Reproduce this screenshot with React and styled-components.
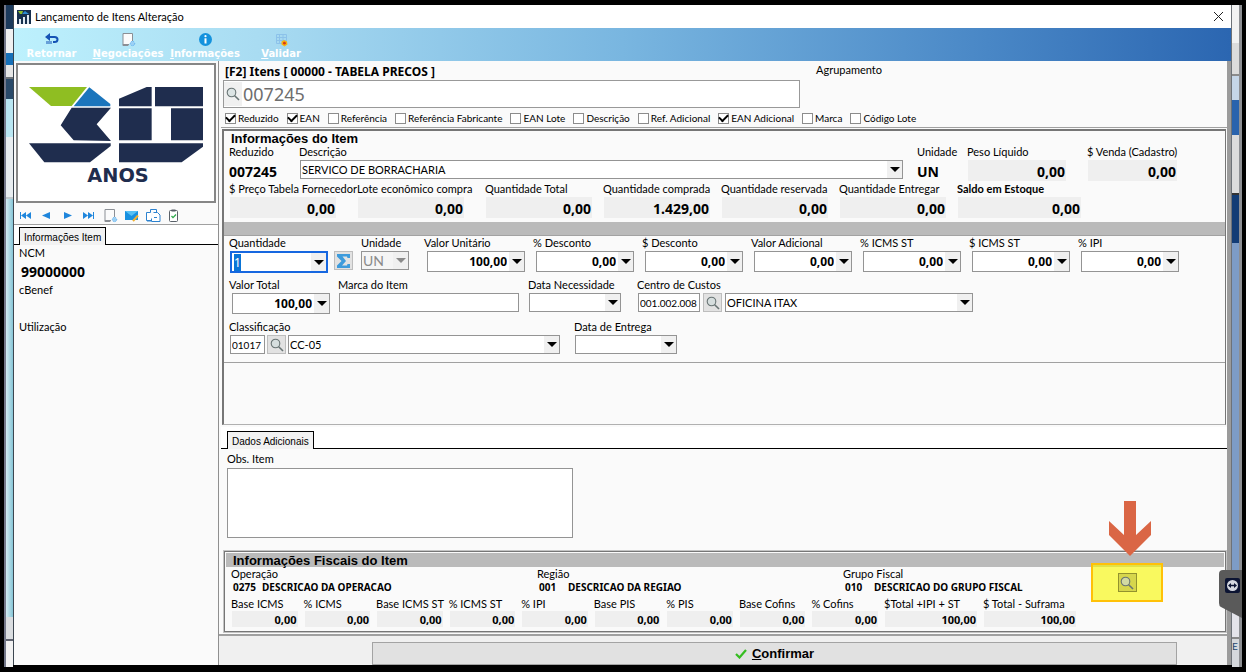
import React, { useState } from 'react'
import styled, { createGlobalStyle, css } from 'styled-components'

const ui = 'Lato, "Noto Sans", sans-serif'
const strong = '"Noto Sans", "Open Sans", sans-serif'
const sans = '"Liberation Sans", Arial, sans-serif'

const GlobalStyle = createGlobalStyle`
  * { box-sizing: border-box; }
  body { margin: 0; background: #000; }
  input, select, button, textarea {
    font-family: inherit;
    color: inherit;
    margin: 0;
    border-radius: 0;
  }
`

const Desktop = styled.div`
  position: relative;
  display: grid;
  grid-template-columns: 9px minmax(0, 1fr) 10px;
  min-height: 100vh;
  padding: 5px 4px;
  background: #000;
  color: #000;
  font: 11px/14px ${ui};
`

const Strip = styled.div`
  display: flex;
  flex-direction: column;
  overflow: hidden;
  border-left: ${p => (p.$left ? '2px solid #74788a' : '0')};
  border-right: ${p => (p.$left ? '0' : '3px solid #8d8f93')};
`

const Slice = styled.div`
  height: ${p => p.$h || 'auto'};
  flex: ${p => (p.$h ? 'none' : '1')};
  background: ${p => p.$bg};
  border-bottom: ${p => (p.$line ? `2px solid ${p.$line}` : '0')};
  color: #26466b;
  font-size: 10px;
`

const Window = styled.section`
  display: flex;
  flex-direction: column;
  min-width: 0;
  margin-bottom: 2px;
  border-left: 1px solid #3c4650;
  border-right: 1px solid #6d7278;
  background: #fafafa;
`

const TitleBar = styled.header`
  display: flex;
  align-items: center;
  gap: 4px;
  height: 23px;
  padding: 0 7px 0 3px;
  background: #fff;

  h1 {
    flex: 1;
    margin: 0;
    font-size: 11px;
    font-weight: 400;
  }
`

const PlainButton = styled.button`
  display: flex;
  align-items: center;
  justify-content: center;
  padding: 0;
  border: 0;
  background: none;
`

const Toolbar = styled.nav`
  display: flex;
  height: 33px;
  padding: 0 7px;
  background: linear-gradient(90deg, #bdf1fd 0%, #a9dcf2 20%, #79b6e0 50%, #4987c6 80%, #2b66b1 100%);
`

const ToolButton = styled.button`
  display: flex;
  flex-direction: column;
  align-items: center;
  justify-content: flex-start;
  width: ${p => p.$w};
  padding: 4px 0 0;
  border: 0;
  background: none;
  color: #fff;
  font-family: "DejaVu Sans", sans-serif;
  font-size: 10px;
  font-weight: 700;
  line-height: 13px;

  span::first-letter { text-decoration: ${p => (p.$plain ? 'none' : 'underline')}; }
`

const Body = styled.div`
  display: grid;
  grid-template-columns: 205px minmax(0, 1fr);
  flex: 1;
`

const Sidebar = styled.aside`
  display: flex;
  flex-direction: column;
  border-right: 1px solid #8f8f8f;
`

const LogoFrame = styled.div`
  height: 140px;
  margin: 2px 2px 3px;
  border: 2px solid #868686;
  background: #fff;

  svg { display: block; width: 100%; height: 100%; }
`

const NavRow = styled.div`
  display: flex;
  align-items: center;
  gap: 7px;
  height: 19px;
  padding-left: 5px;
  border-bottom: 1px solid #a0a0a0;
`

const TabStrip = styled.div`
  display: flex;
  padding: ${p => p.$pad};
  background: #fff;
  border-bottom: 1px solid #000;
`

const Tab = styled.button`
  height: 18px;
  margin-bottom: -1px;
  padding: 2px 4px 0;
  border: 1px solid #000;
  border-bottom: 0;
  background: #f2f2f2;
  font-family: ${sans};
  font-size: 10px;
  line-height: 14px;
`

const SideInfo = styled.dl`
  margin: 0;
  padding: 0 5px;

  dt { line-height: 15px; }
  dd {
    margin: 0;
    height: 22px;
    padding: 2px;
    font-family: ${strong};
    font-size: 14px;
    line-height: 20px;
    font-weight: 700;
  }
`

const Main = styled.main`
  display: flex;
  flex-direction: column;
  min-width: 0;
  padding-left: 2px;
  border-right: 4px solid #9b9b9b;
`

const SearchArea = styled.section`
  display: grid;
  grid-template-columns: 577px 1fr;
  column-gap: 16px;
  height: 67px;
  padding: 2px 2px 0;
  border-bottom: 1px solid #a0a0a0;
`

const SearchTitle = styled.label`
  display: block;
  height: 17px;
  padding-left: 2px;
  font-family: ${strong};
  font-size: 12px;
  line-height: 17px;
  font-weight: 700;
`

const SearchBox = styled.div`
  display: flex;
  height: 28px;
  border: 1px solid #999;
  background: #fff;

  button { width: 18px; margin: 1px 0; background: #f0f0f0; }

  input {
    flex: 1;
    border: 0;
    padding: 0 1px;
    background: none;
    color: #6e6e6e;
    font-family: ${strong};
    font-size: 18px;
    outline: 0;
  }
`

const CheckRow = styled.div`
  display: flex;
  gap: 8px;
  grid-column: 1 / -1;
  padding: 0 2px;
  line-height: 20px;
  font-size: 10px;
  white-space: nowrap;

  label { display: flex; align-items: center; gap: 2px; }

  input {
    appearance: none;
    display: grid;
    place-items: center;
    width: 11px;
    height: 11px;
    border: 1px solid #8c8c8c;
    background: #fff;
  }

  input:checked::after {
    content: '';
    width: 7px;
    height: 4px;
    margin-bottom: 2px;
    border-left: 2px solid #000;
    border-bottom: 2px solid #000;
    transform: rotate(-45deg);
  }
`

const ItemPanel = styled.section`
  display: flex;
  flex-direction: column;
  flex: 1;
  margin: 1px 1px 2px 1px;
  border: 2px solid #767676;
  border-right-width: 1px;
  border-bottom-color: #b0b0b0;
  border-bottom-width: 1px;
`

const PanelTitle = styled.h2`
  margin: 0;
  height: 14px;
  padding-left: 7px;
  background: ${p => (p.$grey ? '#bababa' : 'none')};
  font-family: ${sans};
  font-size: 13px;
  line-height: ${p => (p.$grey ? '15px' : '16px')};
  font-weight: 700;
`

const Divider = styled.div`
  height: 14px;
  background: #bababa;
  border-bottom: 1px solid #a2a2a2;
`

const FieldRow = styled.div`
  display: grid;
  grid-template-columns: ${p => p.$cols};
  padding: 0 48px 0 5px;
  height: ${p => p.$h || '42px'};
  align-content: start;
`

const FieldBox = styled.div`
  min-width: 0;
  margin-right: ${p => p.$gap || '0'};
  white-space: nowrap;

  > label {
    display: block;
    height: 15px;
    line-height: 13px;
    font-weight: ${p => (p.$strong ? 700 : 400)};
  }
`

const Line = styled.div`
  display: flex;
  gap: ${p => p.$gap || '3px'};
  margin-left: ${p => p.$indent || '1px'};
`

const Value = styled.output`
  display: block;
  height: ${p => (p.$small ? '16px' : '21px')};
  margin-left: ${p => (p.$plain ? '-1px' : '1px')};
  padding: 0 1px;
  background: ${p => (p.$plain ? 'none' : '#efefef')};
  font-family: ${strong};
  font-size: ${p => (p.$small ? '11px' : '14px')};
  line-height: ${p => (p.$small ? '18px' : '23px')};
  font-weight: 700;
  text-align: ${p => (p.$plain ? 'left' : 'right')};
`

const ComboShell = styled.div`
  position: relative;
  display: flex;
  width: ${p => p.$w || '98px'};
  flex: ${p => (p.$w ? 'none' : '1')};
  height: ${p => (p.$tall ? '21px' : '19px')};
  border: 1px solid #949494;
  background: #fff;

  ${p => p.$focus && css`
    height: 22px;
    border: 2px solid #1667e0;
  `}

  ${p => p.$off && css`
    background: #f5f5f5;
    color: #8a8a8a;
  `}
`

const ComboInput = styled.input`
  flex: 1;
  min-width: 0;
  padding: 0 2px;
  border: 0;
  outline: 0;
  background: none;
  font-family: ${strong};
  font-size: 12px;
  font-weight: ${p => (p.$left ? 400 : 700)};
  text-align: ${p => (p.$left ? 'left' : 'right')};

  &::selection { background: #0a74d6; color: #fff; }
`

const Arrow = styled.button`
  display: flex;
  align-items: center;
  justify-content: center;
  width: 15px;
  padding: 0;
  border: 0;
  background: #f0f0f0;

  &::before {
    content: '';
    border: 5px solid transparent;
    border-top-color: currentColor;
    border-bottom: 0;
  }
`

const Select = styled.select`
  appearance: none;
  flex: 1;
  min-width: 0;
  padding: 0 1px;
  border: 0;
  background: none;
  font-size: ${p => p.$size || '11px'};

  &:disabled { opacity: 1; }
`

const SelectArrow = styled(Arrow).attrs({ as: 'span' })`
  pointer-events: none;
`

const TextInput = styled.input`
  width: ${p => p.$w};
  height: 19px;
  padding: 0 1px;
  border: 1px solid #949494;
  background: #fff;
  font-size: 10px;
`

const SquareButton = styled.button`
  display: flex;
  align-items: center;
  justify-content: center;
  width: 19px;
  height: 19px;
  padding: 0;
  border: 1px solid #bdbdbd;
  background: #e2e2e2;
`

const Rest = styled.div`
  flex: 1;
  border-top: 1px solid #a0a0a0;
`

const Notes = styled.section`
  padding: 0 6px 13px;

  label { display: block; line-height: 19px; }

  textarea {
    display: block;
    width: 346px;
    height: 70px;
    border: 1px solid #949494;
    background: #fff;
    resize: none;
  }
`

const FiscalPanel = styled.section`
  position: relative;
  margin: 0 1px 2px 3px;
  border: 1px solid #767676;
  outline: 1px solid #c4c4c4;
  padding: 1px;
`

const FiscalGrid = styled.div`
  display: grid;
  grid-template-columns: repeat(3, 306px);
  padding-left: 5px;
  line-height: 13px;

  dl { margin: 0; }
  dd {
    display: flex;
    margin: 0;
    padding-left: 2px;
    font-family: ${strong};
    font-size: 10px;
    line-height: 15px;
    font-weight: 700;
  }
  dd span { width: 29px; }
`

const TaxGrid = styled.div`
  display: grid;
  grid-template-columns: repeat(9, minmax(0, 1fr)) 93px 93px;
  gap: 0 6px;
  width: 845px;
  margin: 1px 0 3px 5px;
  white-space: nowrap;

  label { display: block; line-height: 15px; }
`

const Highlight = styled.div`
  position: absolute;
  right: 62px;
  top: 11px;
  display: flex;
  align-items: center;
  justify-content: center;
  width: 72px;
  height: 39px;
  border: 2px solid #ffc107;
  background: rgba(248, 248, 0, 0.62);

  button { border-color: #92922e; background: #d6d64c; }
`

const Pointer = styled.svg`
  position: absolute;
  right: 74px;
  top: -51px;
`

const Footer = styled.footer`
  display: flex;
  height: 31px;
  margin-left: -2px;
  padding: 6px 50px 0 153px;
  border-top: 2px solid #a0a0a0;
  background: #f0f0f0;
`

const ConfirmButton = styled.button`
  display: flex;
  flex: 1;
  align-items: center;
  justify-content: center;
  gap: 5px;
  border: 1px solid #a3a3a3;
  background: #e1e1e1;
  font-family: ${sans};
  font-size: 13px;
  font-weight: 700;
`

const RemoteTab = styled.svg`
  position: absolute;
  right: 4px;
  top: 570px;
`

const Magnifier = ({ size = 14 }) => (
  <svg width={size} height={size} viewBox="0 0 14 14" fill="none">
    <circle cx="5.5" cy="5.5" r="4.3" fill="#cfdcdc" fillOpacity="0.6" stroke="#687474" strokeWidth="1.1" />
    <path d="M8.7 8.7l4.3 4.3" stroke="#687474" strokeWidth="1.6" />
  </svg>
)

const AppIcon = () => (
  <svg width="14" height="14" viewBox="0 0 14 14">
    <path fill="#16304e" d="M0 0h14v14H0z" />
    <path fill="#8dbf2c" d="M1 1h5L5 4H3z" />
    <path fill="#2c8ad0" d="M8 1l4 3H5z" />
    <path fill="#dfe9f2" d="M2 9h2v5H2zM6 7h2v7H6zM10 5h2v9h-2z" />
  </svg>
)

const ReturnIcon = () => (
  <svg width="16" height="15" viewBox="0 0 16 15" fill="none">
    <path d="M5 5h5.500q3 0 3 2.500T10.500 10H9" stroke="#1553b5" strokeWidth="2" />
    <path d="M1 5l5-4v8z" fill="#1553b5" />
    <path d="M3 9v3M5 9v3M7 9v3" stroke="#1553b5" />
  </svg>
)

const PageIcon = () => (
  <svg width="15" height="15" viewBox="0 0 15 15" fill="none">
    <path d="M2 1.500h9.500V9M2 1.500v11h6" stroke="#8b8f95" fill="#fbfbfb" />
    <path fill="#fbfbfb" d="M3 2h8v8l-3 2H3z" />
    <path d="M1 12.500h7l-1 1.500H2z" fill="#8b8f95" />
    <circle cx="11.500" cy="11.500" r="2.200" fill="#9cd0f5" stroke="#5aaef0" strokeDasharray="1 1" />
  </svg>
)

const InfoIcon = () => (
  <svg width="15" height="15" viewBox="0 0 15 15">
    <circle cx="7.500" cy="7.500" r="6.500" fill="#1492dd" />
    <circle cx="7.500" cy="4.200" r="1.100" fill="#fff" />
    <path d="M6.500 6.300h2v5.200h-2z" fill="#fff" />
  </svg>
)

const ValidateIcon = () => (
  <svg width="15" height="15" viewBox="0 0 15 15" fill="none">
    <path d="M2.500 2.500h10v9h-10zM2.500 5.500h10M2.500 8.500h10M5.500 2.500v9M9 2.500v9" stroke="#8cc2ea" />
    <path d="M7.500 9.500l2.500-1.500 3 1.500 .500 3-3 2-3-2z" fill="#f6b312" />
    <circle cx="10.400" cy="11.200" r="1.400" fill="#d83a1a" />
  </svg>
)

const arrows = {
  first: 'M1 4h1v7H1zM7 4v7L2 7.500zM12 4v7L7 7.500z',
  prev: 'M10 4v7L2 7.500z',
  next: 'M3 4v7l8-3.500z',
  last: 'M1 4v7l5-3.500zM6 4v7l5-3.500zM11 4h1v7h-1z',
}

const NavArrow = ({ kind }) => (
  <svg width="14" height="15" viewBox="0 0 14 15"><path fill="#1f86dc" d={arrows[kind]} /></svg>
)

const MailIcon = () => (
  <svg width="14" height="15" viewBox="0 0 14 15">
    <path fill="#1790e0" d="M0 3h13v9H0z" />
    <path fill="#55c0f5" d="M0 3h13L6.500 8z" />
    <path stroke="#f0b030" strokeWidth="2" d="M13 7.500l-5 5.500" />
  </svg>
)

const CopyIcon = () => (
  <svg width="15" height="15" viewBox="0 0 15 15" fill="none" stroke="#2c82cf">
    <path d="M4.500 1.500h6v3M4.500 1.500v3H.5v8h5" fill="#fff" />
    <path d="M7.500 4.500h4l2.500 2.500v6.500H5.500v-3" fill="#fff" />
    <path d="M8 9.500h3M1 13h4" />
  </svg>
)

const ClipIcon = () => (
  <svg width="12" height="15" viewBox="0 0 12 15" fill="none">
    <rect x="1.500" y="2.500" width="8" height="11" rx="1" stroke="#596068" fill="#fff" />
    <path d="M3.500 1.500h4v2h-4z" fill="#596068" />
    <path d="M3.500 8L5 9.600 8 6.500" stroke="#2ba84a" strokeWidth="1.300" />
  </svg>
)

const Logo = () => (
  <svg viewBox="54 196 588 404" role="img" aria-label="30 anos">
    <path fill="#8fbe22" d="M87 260h174l-46 57h-62z" />
    <path fill="#1b75bc" d="M268 261l63 50v7H221z" />
    <g fill="#1f2d4e">
      <path d="M215 322h118l-43 50 43 50-112-2-39-45z" />
      <path d="M87 429h245v8l-62 49H133z" />
      <path d="M357 318v-23l83-35h15v58zM465 260h144v58H465z" />
      <path d="M357 324h98v96h-98zM513 324h96v96h-96z" />
      <path d="M357 429h252v10l-64 47H357z" />
      <text x="354" y="546" fontFamily="DejaVu Sans" fontWeight="700" fontSize="58" textAnchor="middle">ANOS</text>
    </g>
  </svg>
)

const Sigma = () => (
  <svg width="15" height="16" viewBox="0 0 15 16">
    <path fill="#3d9bdc" d="M1 1h13v4h-2.500L11 3.500H6.500L10 8l-4 4.500h5l.5-1.500H14v4H1v-2.500L5.500 8 1 3.500z" />
  </svg>
)

const Field = ({ label, gap, strong, id, children }) => (
  <FieldBox $gap={gap} $strong={strong}>
    <label htmlFor={id}>{label}</label>
    {children}
  </FieldBox>
)

const ValueField = ({ id, label, value, gap, strong, plain }) => (
  <Field id={id} label={label} gap={gap} strong={strong}>
    <Value id={id} $plain={plain}>{value}</Value>
  </Field>
)

const Combo = ({ id, value = '', w, tall, focus, left }) => {
  const [text, setText] = useState(value)
  return (
    <ComboShell $w={w} $tall={tall} $focus={focus}>
      <ComboInput
        id={id}
        value={text}
        $left={left}
        autoFocus={focus}
        onFocus={evt => focus && evt.target.select()}
        onChange={evt => setText(evt.target.value)}
      />
      <Arrow type="button" aria-label="Abrir" />
    </ComboShell>
  )
}

const Dropdown = ({ id, name, value, w, tall, off, size }) => (
  <ComboShell $w={w} $tall={tall} $off={off}>
    <Select id={id} aria-label={name} disabled={off} $size={size} defaultValue={value}>
      <option>{value}</option>
    </Select>
    <SelectArrow />
  </ComboShell>
)

const filters = [
  ['Reduzido', true],
  ['EAN', true],
  ['Referência', false],
  ['Referência Fabricante', false],
  ['EAN Lote', false],
  ['Descrição', false],
  ['Ref. Adicional', false],
  ['EAN Adicional', true],
  ['Marca', false],
  ['Código Lote', false],
]

const stock = [
  ['$ Preço Tabela Fornecedor', '0,00'],
  ['Lote econômico compra', '0,00'],
  ['Quantidade Total', '0,00'],
  ['Quantidade comprada', '1.429,00'],
  ['Quantidade reservada', '0,00'],
  ['Quantidade Entregar', '0,00'],
  ['Saldo em Estoque', '0,00'],
]

const amounts = [
  ['Valor Unitário', '100,00'],
  ['% Desconto', '0,00'],
  ['$ Desconto', '0,00'],
  ['Valor Adicional', '0,00'],
  ['% ICMS ST', '0,00'],
  ['$ ICMS ST', '0,00'],
  ['% IPI', '0,00'],
]

const fiscal = [
  ['Operação', '0275', 'DESCRICAO DA OPERACAO'],
  ['Região', '001', 'DESCRICAO DA REGIAO'],
  ['Grupo Fiscal', '010', 'DESCRICAO DO GRUPO FISCAL'],
]

const taxes = [
  ['Base ICMS', '0,00'],
  ['% ICMS', '0,00'],
  ['Base ICMS ST', '0,00'],
  ['% ICMS ST', '0,00'],
  ['% IPI', '0,00'],
  ['Base PIS', '0,00'],
  ['% PIS', '0,00'],
  ['Base Cofins', '0,00'],
  ['% Cofins', '0,00'],
  ['$Total +IPI + ST', '100,00'],
  ['$ Total - Suframa', '100,00'],
]

export default function App() {
  return (
    <Desktop>
      <GlobalStyle />
      <Strip $left>
        <Slice $h="24px" $bg="#1c3a5c" />
        <Slice $h="24px" $bg="#f0f0f0" />
        <Slice $h="12px" $bg="#1670b8" />
        <Slice $h="14px" $bg="#e6e6e6" $line="#6d7278" />
        <Slice $h="20px" $bg="#2a4a6a" />
        <Slice $h="38px" $bg="#b9e6f2" />
        <Slice $h="62px" $bg="#e8edf0" $line="#c0c8cc" />
        <Slice $bg="linear-gradient(90deg, #d3ecf3, #86c5d6)" />
        <Slice $h="24px" $bg="#dadde0" $line="#5f6370" />
        <Slice $h="26px" $bg="#f2f2f2" />
      </Strip>
      <Window>
        <TitleBar>
          <AppIcon />
          <h1>Lançamento de Itens Alteração</h1>
          <PlainButton type="button" aria-label="Fechar">
            <svg width="11" height="11" viewBox="0 0 11 11"><path d="M1 1l9 9M10 1l-9 9" stroke="#222" /></svg>
          </PlainButton>
        </TitleBar>
        <Toolbar>
          <ToolButton $w="61px" $plain><ReturnIcon /><span>Retornar</span></ToolButton>
          <ToolButton $w="92px"><PageIcon /><span>Negociações</span></ToolButton>
          <ToolButton $w="62px"><InfoIcon /><span>Informações</span></ToolButton>
          <ToolButton $w="90px"><ValidateIcon /><span>Validar</span></ToolButton>
        </Toolbar>
        <Body>
          <Sidebar>
            <LogoFrame><Logo /></LogoFrame>
            <NavRow>
              {Object.keys(arrows).map(kind => (
                <PlainButton key={kind} type="button" aria-label={kind}><NavArrow kind={kind} /></PlainButton>
              ))}
              <PlainButton type="button" aria-label="Novo"><PageIcon /></PlainButton>
              <PlainButton type="button" aria-label="Email"><MailIcon /></PlainButton>
              <PlainButton type="button" aria-label="Copiar"><CopyIcon /></PlainButton>
              <PlainButton type="button" aria-label="Validar"><ClipIcon /></PlainButton>
            </NavRow>
            <TabStrip $pad="2px 5px 0">
              <Tab type="button">Informações Item</Tab>
            </TabStrip>
            <SideInfo>
              <dt>NCM</dt>
              <dd>99000000</dd>
              <dt>cBenef</dt>
              <dd />
              <dt>Utilização</dt>
            </SideInfo>
          </Sidebar>
          <Main>
            <SearchArea>
              <div>
                <SearchTitle htmlFor="busca">[F2] Itens [ 00000 - TABELA PRECOS ]</SearchTitle>
                <SearchBox>
                  <PlainButton type="button" aria-label="Buscar"><Magnifier /></PlainButton>
                  <input id="busca" defaultValue="007245" />
                </SearchBox>
              </div>
              <div>Agrupamento</div>
              <CheckRow>
                {filters.map(([name, on]) => (
                  <label key={name}><input type="checkbox" defaultChecked={on} />{name}</label>
                ))}
              </CheckRow>
            </SearchArea>

            <ItemPanel>
              <PanelTitle>Informações do Item</PanelTitle>
              <FieldRow $cols="70px minmax(0, 1fr) 50px 120px 90px" $h="37px">
                <ValueField id="reduzido" label="Reduzido" value="007245" plain />
                <Field id="descricao" label="Descrição" gap="14px">
                  <Line><Dropdown id="descricao" value="SERVICO DE BORRACHARIA" /></Line>
                </Field>
                <ValueField id="un" label="Unidade" value="UN" plain />
                <ValueField id="peso" label="Peso Líquido" value="0,00" gap="21px" />
                <ValueField id="venda" label="$ Venda (Cadastro)" value="0,00" />
              </FieldRow>
              <FieldRow $cols="128px 128px repeat(4, 118px) 124px" $h="40px">
                {stock.map(([label, value], i) => (
                  <ValueField
                    key={label}
                    id={`estoque${i}`}
                    label={label}
                    value={value}
                    gap={i < 2 ? '21px' : i < 6 ? '11px' : '0'}
                    strong={i === 6}
                  />
                ))}
              </FieldRow>
              <Divider />
              <FieldRow $cols="105px 27px 63px repeat(7, 109px)">
                <Field id="qtd" label="Quantidade">
                  <Line><Combo id="qtd" value="1" w="98px" focus left /></Line>
                </Field>
                <Field label={'\u00a0'}>
                  <Line $indent="0"><SquareButton type="button" aria-label="Somar"><Sigma /></SquareButton></Line>
                </Field>
                <Field id="unidade" label="Unidade">
                  <Line $indent="0"><Dropdown id="unidade" value="UN" w="48px" off size="14px" /></Line>
                </Field>
                {amounts.map(([label, value], i) => (
                  <Field key={label} id={`valor${i}`} label={label}>
                    <Line $indent="3px"><Combo id={`valor${i}`} value={value} w="98px" tall /></Line>
                  </Field>
                ))}
              </FieldRow>
              <FieldRow $cols="109px 190px 109px 336px">
                <Field id="total" label="Valor Total">
                  <Line $indent="3px"><Combo id="total" value="100,00" w="98px" tall /></Line>
                </Field>
                <Field id="marca" label="Marca do Item">
                  <Line><TextInput id="marca" $w="180px" /></Line>
                </Field>
                <Field id="necessidade" label="Data Necessidade">
                  <Line><Combo id="necessidade" w="92px" left /></Line>
                </Field>
                <Field id="custos" label="Centro de Custos">
                  <Line>
                    <TextInput id="custos" $w="62px" defaultValue="001.002.008" />
                    <SquareButton type="button" aria-label="Buscar centro de custos"><Magnifier /></SquareButton>
                    <Dropdown name="Centro de Custos" value="OFICINA ITAX" w="248px" />
                  </Line>
                </Field>
              </FieldRow>
              <FieldRow $cols="345px 104px">
                <Field id="classificacao" label="Classificação">
                  <Line $gap="2px">
                    <TextInput id="classificacao" $w="35px" defaultValue="01017" />
                    <SquareButton type="button" aria-label="Buscar classificação"><Magnifier /></SquareButton>
                    <Dropdown name="Classificação" value="CC-05" w="272px" />
                  </Line>
                </Field>
                <Field id="entrega" label="Data de Entrega">
                  <Line><Combo id="entrega" w="102px" left /></Line>
                </Field>
              </FieldRow>
              <Rest />
            </ItemPanel>

            <TabStrip $pad="4px 6px 0">
              <Tab type="button">Dados Adicionais</Tab>
            </TabStrip>
            <Notes>
              <label htmlFor="obs">Obs. Item</label>
              <textarea id="obs" />
            </Notes>

            <FiscalPanel>
              <PanelTitle $grey>Informações Fiscais do Item</PanelTitle>
              <FiscalGrid>
                {fiscal.map(([label, code, text]) => (
                  <dl key={label}>
                    <dt>{label}</dt>
                    <dd><span>{code}</span>{text}</dd>
                  </dl>
                ))}
              </FiscalGrid>
              <TaxGrid>
                {taxes.map(([label, value], i) => (
                  <div key={label}>
                    <label htmlFor={`taxa${i}`}>{label}</label>
                    <Value id={`taxa${i}`} $small>{value}</Value>
                  </div>
                ))}
              </TaxGrid>
              <Highlight>
                <SquareButton type="button" aria-label="Detalhes fiscais"><Magnifier /></SquareButton>
              </Highlight>
              <Pointer width="42" height="55" viewBox="0 0 42 55">
                <path fill="#da6645" d="M15 0h12v34l15-14v14L21 55 0 34V20l15 14z" />
              </Pointer>
            </FiscalPanel>
            <Footer>
              <ConfirmButton type="button">
                <svg width="12" height="10" viewBox="0 0 12 10" fill="none">
                  <path d="M1 5l3.500 3.500L11 1" stroke="#35bd20" strokeWidth="2.200" />
                </svg>
                <span><u>C</u>onfirmar</span>
              </ConfirmButton>
            </Footer>
          </Main>
        </Body>
      </Window>
      <Strip>
        <Slice $h="38px" $bg="#f2f2f2" />
        <Slice $h="33px" $bg="#dcdcdc" $line="#8b8b8b" />
        <Slice $h="24px" $bg="#c5d6e8" />
        <Slice $h="35px" $bg="#2a63ad" />
        <Slice $h="60px" $bg="#dcdcdc" $line="#333" />
        <Slice $h="48px" $bg="#123c75" />
        <Slice $bg="#7d9cc6" />
        <Slice $h="34px" $bg="#e4e4ea" $line="#888" />
        <Slice $h="28px" $bg="#d5d8dc">E</Slice>
      </Strip>
      <RemoteTab width="23" height="48" viewBox="0 0 23 48">
        <path fill="#5a5a5a" d="M4 0h19v48L2 37q-2-1-2-4V4q0-4 4-4z" />
        <rect x="6" y="8" width="15" height="15" rx="2" fill="#0c1432" />
        <circle cx="13.500" cy="15.500" r="5.500" fill="#d5d8e0" />
        <path fill="#0c1432" d="M9 15.500l3-2.500v1.800h3V13l3 2.500-3 2.500v-1.800h-3V18z" />
      </RemoteTab>
    </Desktop>
  )
}
